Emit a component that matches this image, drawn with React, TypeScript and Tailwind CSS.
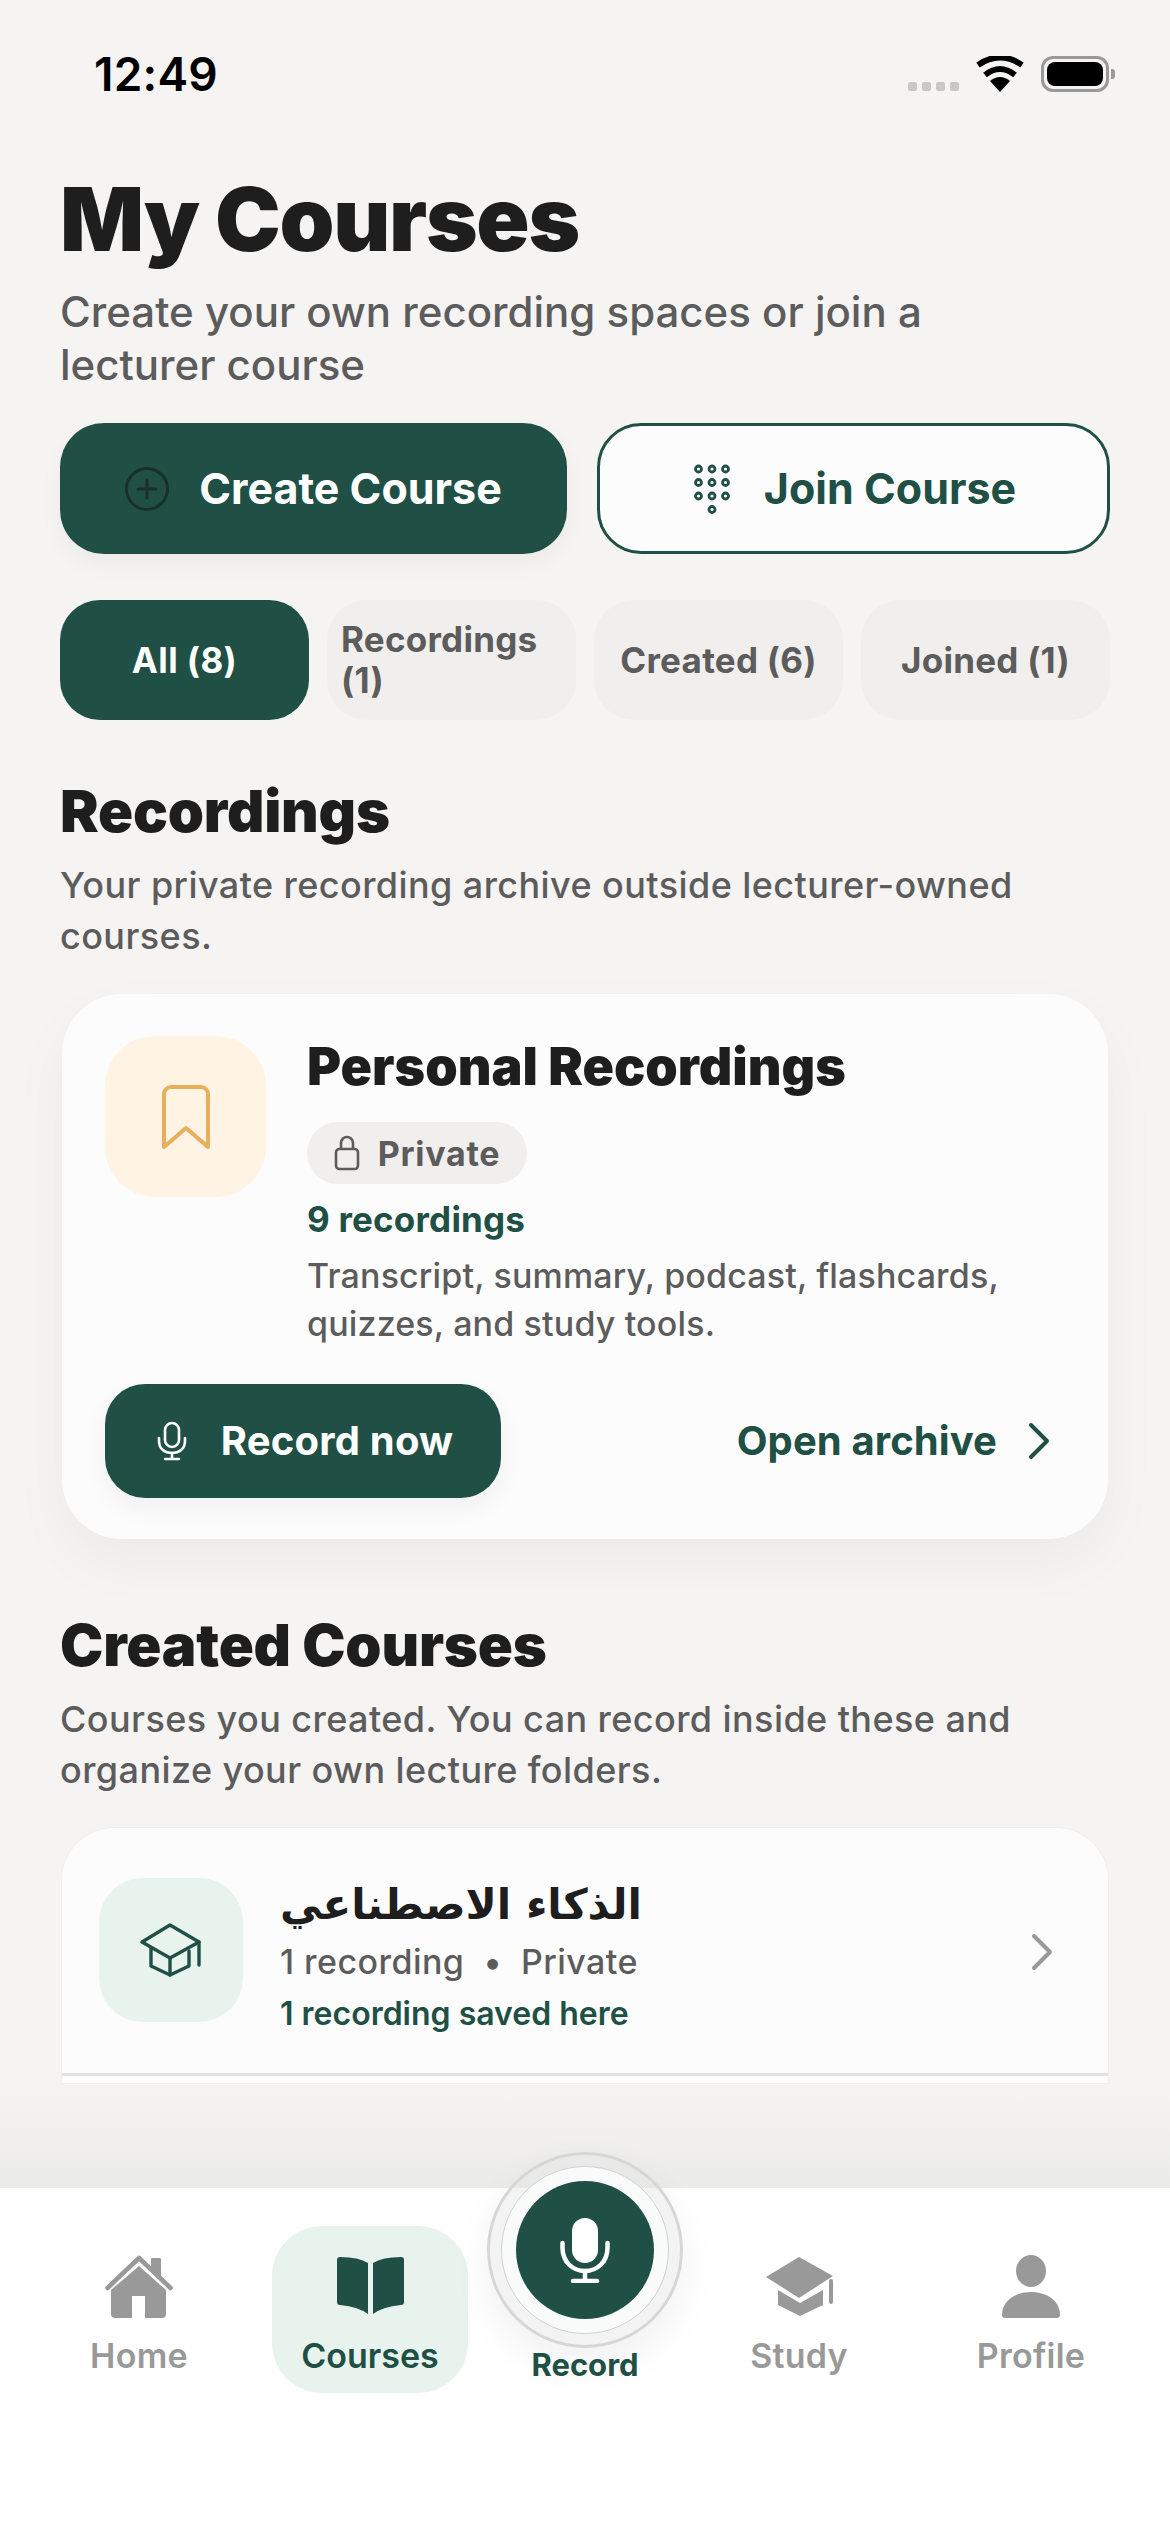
const font = "font-['Inter','Noto_Sans',sans-serif]";

function StatusBar() {
  return (
    <div className="flex h-[112px] shrink-0 items-end justify-between pl-[94px] pr-[55px]">
      <span className="mb-[10px] text-[46px] leading-[56px] font-semibold tracking-[0.2px] text-black">12:49</span>
      <div className="mb-[20px] flex items-end">
        <div className="mr-[17px] mb-[1px] flex gap-[5px]">
          <i className="h-[9px] w-[9px] rounded-[2px] bg-[#c8c8c6]" />
          <i className="h-[9px] w-[9px] rounded-[2px] bg-[#c8c8c6]" />
          <i className="h-[9px] w-[9px] rounded-[2px] bg-[#c8c8c6]" />
          <i className="h-[9px] w-[9px] rounded-[2px] bg-[#c8c8c6]" />
        </div>
        <svg width="48" height="36" viewBox="0 0 48 36" className="mr-[17px]">
          <path d="M24 36 L14 25 Q24 17 34 25 Z" fill="#000" />
          <path d="M9 19 Q24 7 39 19" fill="none" stroke="#000" strokeWidth="6" />
          <path d="M2 9 Q24 -6 46 9" fill="none" stroke="#000" strokeWidth="6" />
        </svg>
        <div className="flex h-[36px] w-[68px] items-center justify-center rounded-[12px] border-[3px] border-[#999]">
          <div className="h-[24px] w-[56px] rounded-[8px] bg-black" />
        </div>
        <div className="mb-[13px] ml-[2px] h-[10px] w-[4px] rounded-r-[3px] bg-[#999]" />
      </div>
    </div>
  );
}

function DialPad() {
  const rows = [0, 1, 2];
  const cols = [0, 1, 2];
  return (
    <svg width="36" height="50" viewBox="0 0 36 50" fill="none" stroke="#205045" strokeWidth="2.8">
      {rows.map((r) =>
        cols.map((c) => <circle key={`${r}-${c}`} cx={4.5 + c * 13.5} cy={5 + r * 13.5} r="3" />),
      )}
      <circle cx="18" cy="45.5" r="3" />
    </svg>
  );
}

function PlusCircle() {
  return (
    <svg width="44" height="44" viewBox="0 0 44 44" fill="none" stroke="#1a2f2a" strokeWidth="3" strokeLinecap="round">
      <circle cx="22" cy="22" r="20.5" />
      <path d="M22 13 V31 M13 22 H31" />
    </svg>
  );
}

function BookmarkIcon() {
  return (
    <svg width="48" height="66" viewBox="0 0 48 66" fill="none" stroke="#e9ae5c" strokeWidth="4" strokeLinejoin="round">
      <path d="M2 63 V10 a7 7 0 0 1 7-7 H39 a7 7 0 0 1 7 7 V63 L24 44 Z" />
    </svg>
  );
}

function LockIcon() {
  return (
    <svg width="26" height="36" viewBox="0 0 26 36" fill="none" stroke="#5c5c5c" strokeWidth="2.6" strokeLinejoin="round">
      <rect x="2" y="14" width="22" height="20" rx="3.5" />
      <path d="M7 14 V8 a6 6 0 0 1 12 0 V14" />
    </svg>
  );
}

function SmallMic() {
  return (
    <svg width="30" height="40" viewBox="0 0 30 40" fill="none" stroke="#fff" strokeWidth="2.6" strokeLinecap="round">
      <rect x="8" y="2" width="14" height="24" rx="7" />
      <path d="M2 17 V20 C2 28 8 32 15 32 S28 28 28 20 V17" />
      <path d="M15 32 V38 M8 38 H22" />
    </svg>
  );
}

function Chevron({ color }: { color: string }) {
  return (
    <svg width="24" height="38" viewBox="0 0 24 38" fill="none" stroke={color} strokeWidth="4" strokeLinecap="round" strokeLinejoin="round">
      <path d="M4 3 L20 19 L4 35" />
    </svg>
  );
}

function OutlineCap() {
  return (
    <svg width="62" height="54" viewBox="0 0 62 54" fill="none" stroke="#205045" strokeWidth="3.4" strokeLinecap="round" strokeLinejoin="round">
      <path d="M30 2 L59 19 L30 35 L2 19 Z" />
      <path d="M11 25 V43 L30 52 L49 43 V28" />
      <path d="M30 35 V52" />
      <path d="M59 19 V42" />
    </svg>
  );
}

function SectionHead({ title, children }: { title: string; children: string }) {
  return (
    <div>
      <h2 className="text-[58px] leading-[68px] font-black tracking-[-0.2px] text-[#1e1e1e]">{title}</h2>
      <p className="mt-[15px] text-[36px] leading-[51px] font-medium tracking-[0.42px] text-[#5c5c5c]">{children}</p>
    </div>
  );
}

function FilterTab({ label, active }: { label: string; active?: boolean }) {
  return (
    <div
      className={
        active
          ? "flex h-[120px] flex-1 items-center justify-center rounded-[40px] bg-[#205045] px-[14px] text-[35px] leading-[41px] font-bold tracking-[0.4px] text-white"
          : "flex h-[120px] flex-1 items-center justify-center rounded-[40px] bg-[#f0efed] px-[14px] text-[35px] leading-[41px] font-bold tracking-[0.25px] text-[#5c5c5c]"
      }
    >
      <span>{label}</span>
    </div>
  );
}

function HomeIcon() {
  return (
    <svg width="68" height="63" viewBox="0 0 68 63" fill="#999">
      <path d="M34 11 L61 35 V59 a4 4 0 0 1-4 4 H40 V41 H27 V63 H10 a4 4 0 0 1-4-4 V35 Z" />
      <path d="M2.5 33 L34 3 L65.5 33" fill="none" stroke="#999" strokeWidth="4.6" strokeLinecap="round" strokeLinejoin="round" />
      <path d="M46 4 a1 1 0 0 1 1-1 H55 a1 1 0 0 1 1 1 V22 L46 13 Z" />
    </svg>
  );
}

function BookIcon() {
  return (
    <svg width="67" height="57" viewBox="0 0 67 57" fill="#205045" className="mb-[4px]">
      <path d="M3 0 Q22 0 31 6 V57 Q22 50 3 48 a3 3 0 0 1-3-3 V3 a3 3 0 0 1 3-3 Z" />
      <path d="M64 0 Q45 0 36 6 V57 Q45 50 64 48 a3 3 0 0 0 3-3 V3 a3 3 0 0 0-3-3 Z" />
    </svg>
  );
}

function CapIcon() {
  return (
    <svg width="67" height="59" viewBox="0 0 67 59" fill="#999" className="mb-[2px]">
      <path d="M33 0 L67 19 L33 41 L0 20 Z" />
      <path d="M12 33 V48 L34 59 L57 48 V33 L34 46 Z" />
      <rect x="63" y="22" width="4" height="25" rx="2" />
    </svg>
  );
}

function PersonIcon() {
  return (
    <svg width="58" height="63" viewBox="0 0 58 63" fill="#999">
      <ellipse cx="29" cy="16" rx="15" ry="16" />
      <path d="M0 60 C0 46 13 37 29 37 S58 46 58 60 a3 3 0 0 1-3 3 H3 a3 3 0 0 1-3-3 Z" />
    </svg>
  );
}

function NavItem({ label, icon, className }: { label: string; icon: React.ReactNode; className: string }) {
  return (
    <div className={`flex flex-col items-center pt-[28px] ${className}`}>
      <div className="flex h-[64px] items-end">{icon}</div>
      <span className="mt-[18px] text-[34px] leading-[40px] font-semibold tracking-[0.25px] text-[#999]">{label}</span>
    </div>
  );
}

function RecordButton() {
  return (
    <div className="absolute top-[-36px] left-[487px] flex w-[196px] flex-col items-center">
      <div className="flex size-[196px] items-center justify-center rounded-full border-[3px] border-[#d6d7d5] bg-[#e6e7e5]/50 shadow-[0_16px_40px_rgba(0,0,0,0.06)]">
        <div className="flex size-[168px] items-center justify-center rounded-full border border-[#d0d2d0] bg-[#f9fafa]">
          <div className="flex size-[138px] items-center justify-center rounded-full bg-[#205045]">
            <svg width="50" height="66" viewBox="0 0 50 66" fill="none" stroke="#fff" strokeWidth="4.5" strokeLinecap="round">
              <rect x="12" y="1" width="26" height="45" rx="13" fill="#fff" stroke="none" />
              <path d="M2.5 26 V31 C2.5 45 13 54 25 54 S47.5 45 47.5 31 V26" />
              <path d="M25 54 V64 M13 64 H37" />
            </svg>
          </div>
        </div>
      </div>
      <span className="-mt-[3px] text-[31px] leading-[40px] font-bold text-[#205045]">Record</span>
    </div>
  );
}

export default function App() {
  return (
    <div className={`${font} flex h-[2532px] w-[1170px] flex-col overflow-hidden bg-[#f5f4f2]`}>
      <StatusBar />

      <main className="h-[1972px] shrink-0 overflow-hidden px-[60px]">
        <h1 className="mt-[59px] text-[88px] leading-[96px] font-black tracking-[-1.3px] text-[#1e1e1e]">My Courses</h1>
        <p className="mt-[18px] max-w-[1000px] text-[42px] leading-[53px] font-medium text-[#5c5c5c]">
          Create your own recording spaces or join a lecturer course
        </p>

        <div className="mt-[32px] flex gap-[30px]">
          <button className="flex h-[131px] w-[507px] items-center justify-center gap-[30px] rounded-[44px] bg-[#205045] text-[43px] font-bold text-white shadow-[0_10px_24px_rgba(0,0,0,0.04)]">
            <PlusCircle />
            Create Course
          </button>
          <button className="flex h-[131px] w-[513px] items-center justify-center gap-[34px] rounded-[44px] border-[3px] border-[#205045] bg-[#fcfcfc] pl-[3px] text-[43px] font-bold text-[#205045]">
            <DialPad />
            Join Course
          </button>
        </div>

        <div className="mt-[46px] flex gap-[18px]">
          <FilterTab label="All (8)" active />
          <FilterTab label="Recordings (1)" />
          <FilterTab label="Created (6)" />
          <FilterTab label="Joined (1)" />
        </div>

        <div className="mt-[57px]">
          <SectionHead title="Recordings">Your private recording archive outside lecturer-owned courses.</SectionHead>
        </div>

        <section className="mx-[2px] mt-[32px] rounded-[60px] bg-[#fcfcfc] px-[43px] pt-[42px] pb-[41px] shadow-[0_24px_60px_rgba(0,0,0,0.04)]">
          <div className="flex gap-[41px]">
            <div className="flex size-[161px] shrink-0 items-center justify-center rounded-[50px] bg-[#fff3e3]">
              <BookmarkIcon />
            </div>
            <div className="min-w-0 pt-[1px]">
              <h3 className="text-[52px] leading-[60px] font-black text-[#1e1e1e]">Personal Recordings</h3>
              <div className="mt-[25px] flex h-[62px] w-[220px] items-center justify-center gap-[18px] rounded-full bg-[#f0efed] text-[34px] font-bold tracking-[0.7px] text-[#5c5c5c]">
                <LockIcon />
                Private
              </div>
              <p className="mt-[14px] text-[35px] leading-[42px] font-bold tracking-[0.2px] text-[#205045]">9 recordings</p>
              <p className="mt-[12px] text-[34px] leading-[48px] font-medium tracking-[0.15px] text-[#5c5c5c]">
                Transcript, summary, podcast, flashcards, quizzes, and study tools.
              </p>
            </div>
          </div>
          <div className="mt-[36px] flex items-center justify-between pr-[14px]">
            <button className="flex h-[114px] w-[396px] items-center justify-center gap-[34px] rounded-[40px] bg-[#205045] pl-[4px] text-[40px] font-bold tracking-[0.2px] text-white shadow-[0_10px_24px_rgba(0,0,0,0.05)]">
              <SmallMic />
              Record now
            </button>
            <div className="flex items-center gap-[30px] text-[40px] font-bold tracking-[0.1px] text-[#205045]">
              Open archive
              <Chevron color="#205045" />
            </div>
          </div>
        </section>

        <div className="mt-[72px]">
          <SectionHead title="Created Courses">Courses you created. You can record inside these and organize your own lecture folders.</SectionHead>
        </div>

        <section className="mx-[2px] mt-[32px] rounded-t-[52px] bg-[#fcfcfc] shadow-[0_0_0_1px_#f0efed]">
          <div className="flex h-[248px] items-start border-b-[3px] border-[#e2e2e1] pt-[50px] pr-[54px] pl-[37px]">
            <div className="flex size-[144px] shrink-0 items-center justify-center rounded-[44px] bg-[#e9f3ee]">
              <OutlineCap />
            </div>
            <div className="ml-[37px] flex-1">
              <h3 dir="rtl" className="w-fit font-['DejaVu_Sans',sans-serif] text-[42px] leading-[54px] font-bold text-[#1e1e1e]">
                الذكاء الاصطناعي
              </h3>
              <p className="mt-[8px] text-[34px] leading-[44px] font-medium tracking-[0.45px] text-[#5c5c5c]">1 recording&nbsp; •&nbsp; Private</p>
              <p className="mt-[10px] text-[32px] leading-[40px] font-semibold text-[#205045]">1 recording saved here</p>
            </div>
            <div className="mt-[55px]">
              <Chevron color="#999" />
            </div>
          </div>
          <div className="h-[7px]" />
        </section>
      </main>

      <div className="h-[104px] shrink-0 bg-gradient-to-b from-[#f5f4f2] to-[#ebebe9]" />

      <nav className="relative flex flex-1 items-start bg-white pt-[38px]">
        <NavItem label="Home" icon={<HomeIcon />} className="ml-[89px] w-[100px]" />
        <div className="ml-[83px] flex h-[167px] w-[196px] flex-col items-center rounded-[50px] bg-[#e9f3ee] pt-[28px]">
          <div className="flex h-[64px] items-end">
            <BookIcon />
          </div>
          <span className="mt-[18px] text-[34px] leading-[40px] font-semibold text-[#205045]">Courses</span>
        </div>
        <NavItem label="Study" icon={<CapIcon />} className="ml-[281px] w-[100px]" />
        <NavItem label="Profile" icon={<PersonIcon />} className="ml-[122px] w-[120px]" />
        <RecordButton />
      </nav>
    </div>
  );
}
